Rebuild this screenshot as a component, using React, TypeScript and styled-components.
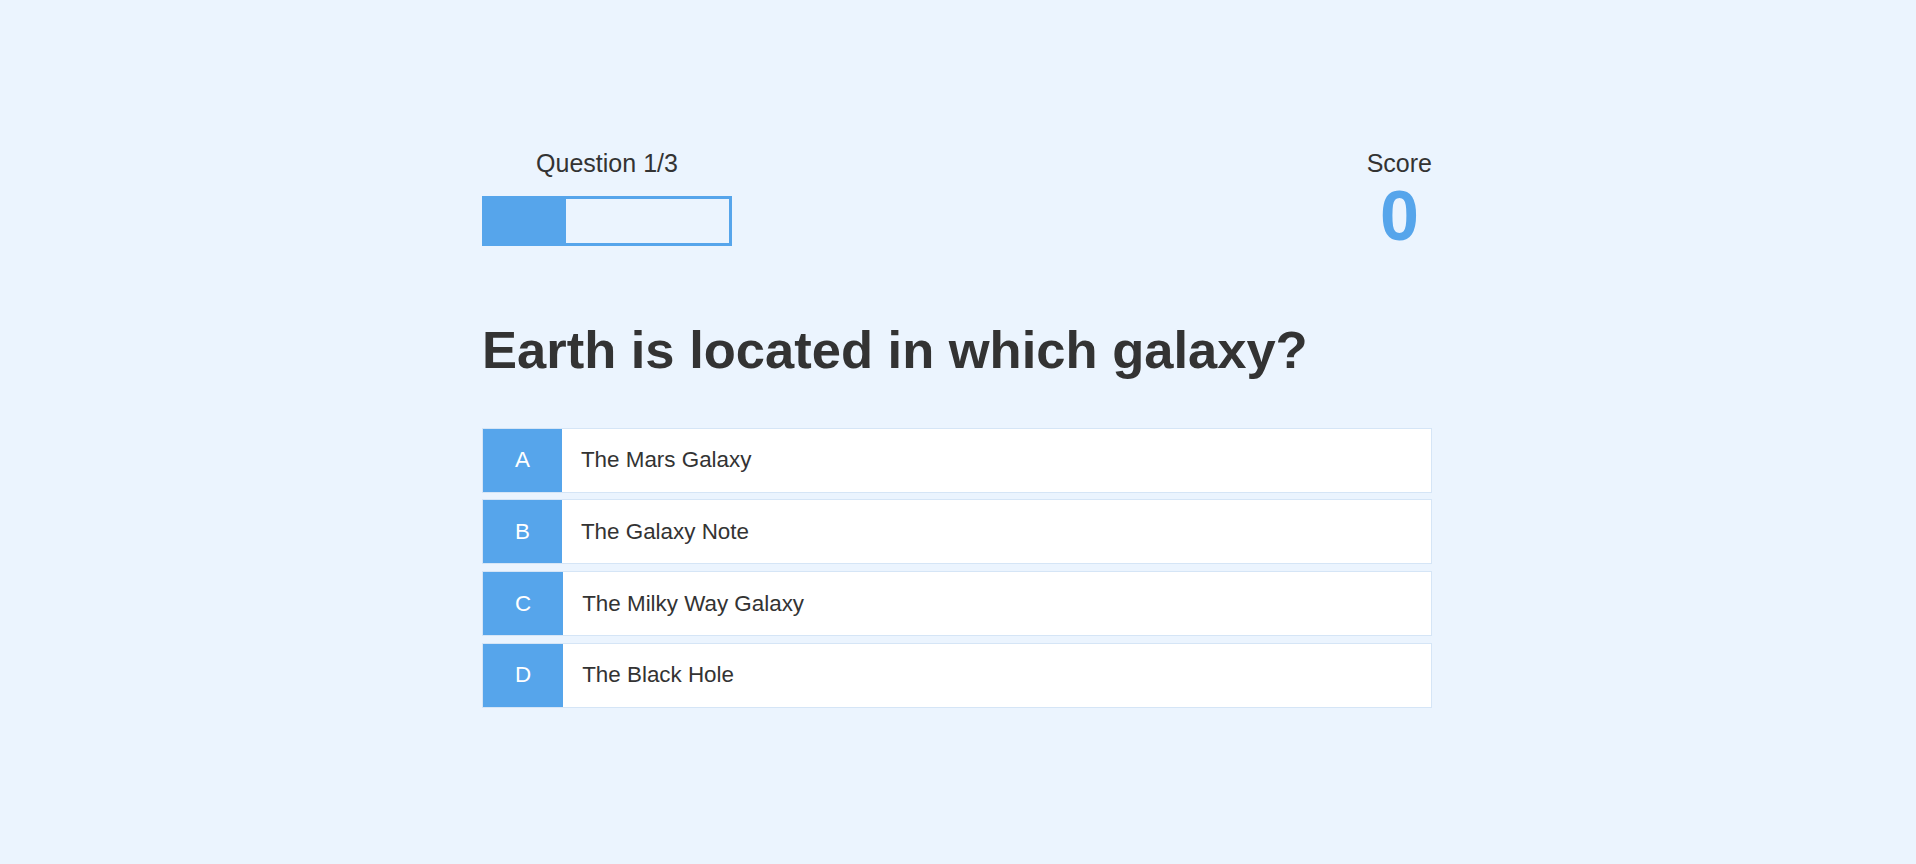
import React from "react";
import styled, { createGlobalStyle } from "styled-components";

const GlobalStyle = createGlobalStyle`
  html, body {
    margin: 0;
    padding: 0;
    background: #ebf4fe;
    font-family: "Liberation Sans", Arial, Helvetica, sans-serif;
    color: #333333;
  }
  * { box-sizing: border-box; }
`;

const Page = styled.div`
  min-height: 864px;
  display: flex;
  justify-content: center;
  padding: 149px 2px 0 0;
`;

const Container = styled.div`
  width: 950px;
`;

const Hud = styled.div`
  display: flex;
  justify-content: space-between;
  align-items: flex-start;
`;

const HudItem = styled.div`
  display: flex;
  flex-direction: column;
  align-items: center;
`;

const HudLabel = styled.p`
  margin: 0;
  font-size: 25px;
  line-height: 28px;
  text-align: center;
`;

const ProgressBar = styled.div`
  width: 250px;
  height: 50px;
  border: 3px solid #56a5eb;
  margin-top: 18.5px;
`;

const ProgressFill = styled.div`
  height: 100%;
  background: #56a5eb;
`;

const ScoreValue = styled.h1`
  margin: -1px 0 0;
  font-size: 70px;
  font-weight: 700;
  line-height: 80px;
  color: #56a5eb;
  text-align: center;
`;

const Question = styled.h2`
  margin: 63.5px 0 48.2px;
  font-size: 52.5px;
  font-weight: 700;
  line-height: 60px;
  color: #333333;
`;

const Choice = styled.div`
  display: flex;
  align-items: stretch;
  height: 65px;
  margin-bottom: 6.7px;
  background: #ffffff;
  border: 1px solid #d5e5f6;
  font-size: 22.4px;
  cursor: pointer;
`;

const ChoicePrefix = styled.p`
  margin: 0;
  padding: 0 32px;
  display: flex;
  align-items: center;
  background: #56a5eb;
  color: #ffffff;
`;

const ChoiceText = styled.p`
  margin: 0;
  padding: 0 19px;
  display: flex;
  align-items: center;
  flex: 1;
`;

const choices = [
  { prefix: "A", text: "The Mars Galaxy" },
  { prefix: "B", text: "The Galaxy Note" },
  { prefix: "C", text: "The Milky Way Galaxy" },
  { prefix: "D", text: "The Black Hole" },
];

export default function App() {
  const current = 1;
  const total = 3;
  return (
    <>
      <GlobalStyle />
      <Page>
        <Container>
          <Hud>
            <HudItem>
              <HudLabel>
                Question {current}/{total}
              </HudLabel>
              <ProgressBar>
                <ProgressFill style={{ width: `${(current / total) * 100}%` }} />
              </ProgressBar>
            </HudItem>
            <HudItem>
              <HudLabel>Score</HudLabel>
              <ScoreValue>0</ScoreValue>
            </HudItem>
          </Hud>
          <Question>Earth is located in which galaxy?</Question>
          {choices.map((c) => (
            <Choice key={c.prefix}>
              <ChoicePrefix>{c.prefix}</ChoicePrefix>
              <ChoiceText>{c.text}</ChoiceText>
            </Choice>
          ))}
        </Container>
      </Page>
    </>
  );
}
